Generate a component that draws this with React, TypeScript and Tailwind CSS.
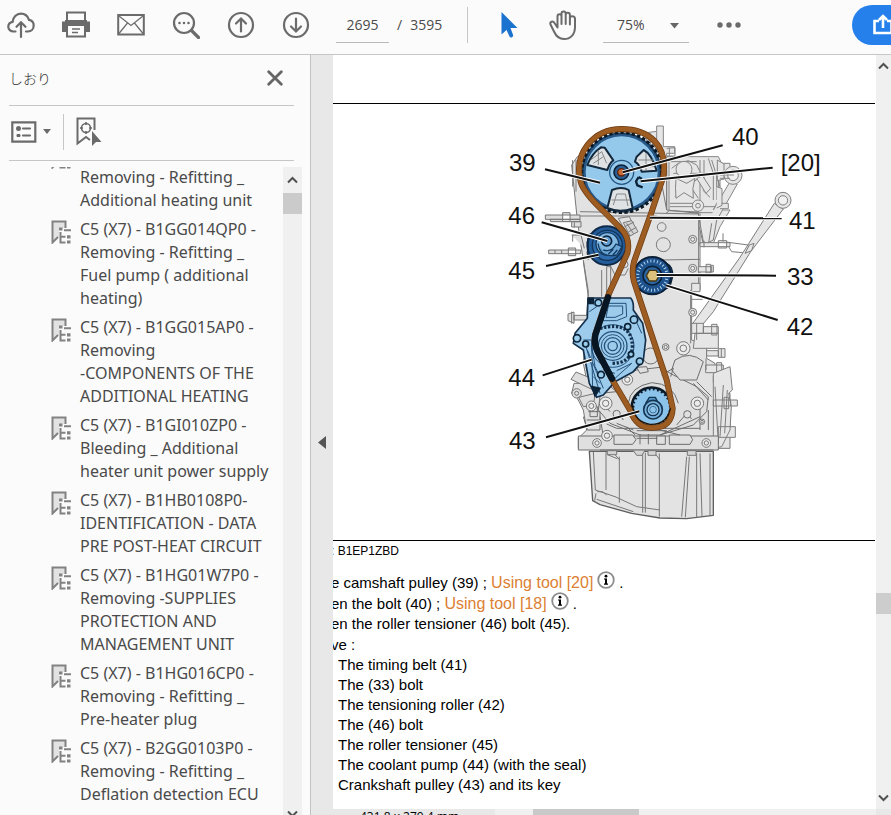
import { useState } from "react";
import type { ReactNode } from "react";

const bookmarks = [
    "C5 (X7) - B1GG0149P0 -\nRemoving - Refitting _\nAdditional heating unit",
    "C5 (X7) - B1GG014QP0 -\nRemoving - Refitting _\nFuel pump ( additional\nheating)",
    "C5 (X7) - B1GG015AP0 -\nRemoving\n-COMPONENTS OF THE\nADDITIONAL HEATING",
    "C5 (X7) - B1GI010ZP0 -\nBleeding _ Additional\nheater unit power supply",
    "C5 (X7) - B1HB0108P0-\nIDENTIFICATION - DATA\nPRE POST-HEAT CIRCUIT",
    "C5 (X7) - B1HG01W7P0 -\nRemoving -SUPPLIES\nPROTECTION AND\nMANAGEMENT UNIT",
    "C5 (X7) - B1HG016CP0 -\nRemoving - Refitting _\nPre-heater plug",
    "C5 (X7) - B2GG0103P0 -\nRemoving - Refitting _\nDeflation detection ECU",
];

const parts = [
    "The timing belt (41)",
    "The (33) bolt",
    "The tensioning roller (42)",
    "The (46) bolt",
    "The roller tensioner (45)",
    "The coolant pump (44) (with the seal)",
    "Crankshaft pulley (43) and its key",
];

// label text, text position, leader line
const callouts = [
    { text: "39", x: 27, y: 182, line: [135, 178, 300, 218] },
    { text: "46", x: 25, y: 341, line: [125, 337, 322, 393] },
    { text: "45", x: 25, y: 507, line: [138, 468, 296, 434] },
    { text: "44", x: 25, y: 829, line: [128, 796, 275, 749] },
    { text: "43", x: 27, y: 1018, line: [138, 982, 418, 904] },
    { text: "40", x: 696, y: 106, line: [368, 187, 668, 106] },
    { text: "[20]", x: 842, y: 183, line: [422, 214, 818, 173] },
    { text: "41", x: 867, y: 356, line: [450, 323, 845, 325] },
    { text: "33", x: 861, y: 524, line: [470, 495, 828, 497] },
    { text: "42", x: 860, y: 674, line: [498, 526, 833, 630] },
];

function IconButton({ label, className = "", children }: { label: string; className?: string; children: ReactNode }) {
    return (
        <button type="button" aria-label={label} className={`flex h-8 shrink-0 items-center justify-center text-[#6b6b6b] ${className}`}>
            {children}
        </button>
    );
}

function Chevron({ up = false }: { up?: boolean }) {
    return (
        <svg width="11" height="8" viewBox="0 0 11 8" fill="none" stroke="#505050" strokeWidth="2">
            <path d={up ? "M1 6.5 5.5 2 10 6.5" : "M1 1.5 5.5 6 10 1.5"} />
        </svg>
    );
}

function BookmarkIcon() {
    return (
        <svg className="mt-[2px] shrink-0" width="20" height="24" viewBox="0 0 20 24" fill="none" stroke="#828282" strokeWidth="2">
            <path d="M1.500 1.500H14.500V8H8v9L1.500 23Z" fill="#e2e2e2" stroke="none" />
            <path d="M14.500 8V1.500H1.500V22.500L7 17" />
            <path d="M9.500 12v10.500h5M9.500 16.800h5M13 10.300h7" />
            <path d="M8 9h3.500M16 16.800h3.500M16 22h3.500" strokeWidth="3.200" />
        </svg>
    );
}

function InfoIcon() {
    return (
        <svg className="mx-1 inline-block align-[-1px]" width="18" height="18" viewBox="0 0 18 18">
            <circle cx="9" cy="9" r="7.800" fill="#fff" stroke="#8d8d8d" strokeWidth="1.800" />
            <circle cx="9" cy="5.200" r="1.400" />
            <path d="M7 7.500h3v5h1v1.200H7v-1.200h1V8.600H7Z" />
        </svg>
    );
}

function Bolt({ x, y, r = 12 }: { x: number; y: number; r?: number }) {
    return (
        <g fill="#ececec" stroke="#777" strokeWidth="3">
            <circle cx={x} cy={y} r={r} />
            <circle cx={x} cy={y} r={r * 0.5} fill="none" />
        </g>
    );
}

function EngineDiagram() {
    return (
        <svg className="block h-auto w-full" viewBox="-501 -18 1626 1308" role="img" aria-label="Timing belt layout" strokeLinejoin="round">
            {/* cylinder head */}
            <g fill="#e6e6e6" stroke="#858585" strokeWidth="3">
                <path d="M440 68 470 64 470 48H490V110H524V130H500V140H655L665 160H690V205H660V260L640 300H690L660 350 640 400H480V140Z" />
                <path d="M470 64V150M452 70V140M440 68v40M500 140V310M507 150V300M512 155H590M515 175 535 160 565 152 590 165 600 185M520 190H620M525 205 545 220H575L595 205M525 260 545 235H575L595 265M510 280H590M510 290H645V308H510M600 150V290M612 150V240M625 145 640 190V270M635 150 660 230M655 165V320M668 170V205M600 190H650V270M608 240 630 262" fill="none" />
                <circle cx="552" cy="178" r="24" />
                <path d="M528 205Q525 235 528 265L552 248 580 265Q575 235 585 205L560 220Z" />
                <path d="M590 205 618 250 632 235 608 198ZM652 150l20 12 0 45-20 5Z" />
                <path d="M640 300 690 215 712 222 645 340 610 400" />
                <circle cx="699" cy="196" r="27" />
                <circle cx="699" cy="196" r="16" fill="#f1f1f1" />
                <path d="M660 195h42M660 205h30M500 115l25-2v25h-25M508 113v25" fill="none" />
                <path d="M665 280h20v16h-25M650 230l16 6v50l-16 8" />
                <circle cx="594" cy="287" r="17" />
                <circle cx="594" cy="287" r="7" fill="none" />
            </g>

            {/* engine block */}
            <path d="M215 165 232 140H470L500 300 596 310V535L575 550V690L620 705V745L645 760V840L690 850V1015H235V985L260 960 250 900 232 865 215 850 222 820 262 820 250 760 265 545 242 400 232 330Z" fill="#e2e2e2" stroke="#777" strokeWidth="3" />
            <g fill="none" stroke="#7a7a7a" strokeWidth="3">
                <path d="M218 150v80M228 150v95M240 305 596 312M240 318H470M250 455 265 560M320 470V550M305 480V560M265 450 260 425M500 300V180M480 450 600 448M600 310V540M572 540V700M498 310 508 302 596 306" />
                <path d="M320 470h12v90M330 465 345 495H375L385 475M355 325 388 320 410 365 385 380Z" />
                <circle cx="485" cy="351" r="13" />
                <circle cx="490" cy="404" r="21" />
                <circle cx="374" cy="463" r="10" />
                <path d="M370 338 395 332 414 365 390 378ZM380 340 400 370M374 350l28-14M385 366l24-14" fill="#d5d5d5" />
            </g>

            {/* studs on the left */}
            <g fill="#dedede" stroke="#777" strokeWidth="3">
                <path d="M136 315H240V328H136ZM150 328H240V335H152ZM188 308v26h22v-26ZM215 335h28v16h-28ZM146 420H242V431H146ZM205 414v23h22v-23ZM185 420v11M165 420v11M215 375h28l10 40M218 375v20M223 337v15" />
                <path d="M204 612 222 606V640L204 632ZM222 616H265V630H222ZM215 605v36" />
                <path d="M213 808 228 786 290 812 280 840Z" />
                <circle cx="230" cy="850" r="14" />
                <circle cx="230" cy="850" r="6" />
                <path d="M236 862 250 890 280 885 286 850Z" />
            </g>

            {/* lifting bar and right-hand fittings */}
            <g fill="#e6e6e6" stroke="#7d7d7d" strokeWidth="3">
                <path d="M823 280 850 297 752 425 640 605 590 665 575 645 718 445Z" />
                <path d="M735 430 748 405 762 400 755 422ZM680 400 695 425 728 428M670 395 745 405" fill="none" />
                <circle cx="849" cy="271" r="24" />
                <circle cx="849" cy="271" r="14" fill="#f0f0f0" />
                <path d="M598 350 608 395 620 400 640 390 650 330M598 330 612 405M625 405 635 340" />
                <path d="M600 398H690V410H600ZM612 392v20M655 392v22H680V392ZM669 370v25M595 470H635V486H595ZM618 463h14v26h-14ZM632 466h8v20h-8" />
                <path d="M575 520H600V545H575ZM575 568H608M590 640V690M575 640H610V670H575ZM610 650h45v20h-45ZM635 643h16v32h-16ZM585 670H655V715H580Z" />
                <path d="M620 722H655V738H620ZM655 716h20v26h-20ZM664 716v26M617 765H670V788H617ZM650 758h15v40h-15ZM640 798H690V818H640ZM655 792v38h16v-38ZM618 745V780" />
                <path d="M640 790 690 770 697 840 686 850 694 890 690 960 665 1010 640 1015ZM645 830 655 1000M670 825 660 980M682 840 674 970M640 870H712V888H640ZM672 862v34h14v-34ZM692 870v18M655 950H706V982H655Z" />
            </g>
            <Bolt x={578} y={388} />
            <Bolt x={578} y={475} />
            <Bolt x={578} y={607} />
            <Bolt x={550} y={715} r={20} />
            <Bolt x={497} y={711} r={10} />

            {/* crankcase front */}
            <g fill="#dfdfdf" stroke="#6d6d6d" strokeWidth="3">
                <path d="M300 860 360 800 410 780 480 772 520 795 590 830 625 860 620 905 580 945 480 975H420L330 940 295 900Z" />
                <path d="M515 780 525 750Q570 720 610 755L590 810H540Z" />
                <path d="M385 880Q390 830 455 818 520 820 535 880M340 800 400 785M485 795 520 775 512 800M295 800 350 845M350 845 300 850M580 820 625 870M590 815 635 860M330 905 300 870M345 900 370 930M350 940 400 960M560 910 530 945M600 920 480 975" fill="none" />
                <circle cx="452" cy="738" r="24" />
                <path d="M410 772 440 770 445 785 420 790Z" />
                <path d="M235 978H655V1020H235ZM250 920 262 960M300 920 310 980M260 930H300M265 905H300V960H262M270 890H292V920H270Z" />
                <path d="M342 975h56l10 14-10 14h-56ZM508 975h62l8 14-8 14h-62ZM470 978h26v25h-26ZM420 972V1003M445 972V1003M410 985h62M480 960 540 975" />
                <path d="M320 942 350 955H600M410 962H500M380 950l25 25M600 890V960M625 900V960M345 905l25 22M555 905l20 22" fill="none" />
                <circle cx="562" cy="913" r="11" />
                <circle cx="350" cy="912" r="11" />
            </g>
            <Bolt x={382} y={809} r={16} />
            <Bolt x={317} y={880} r={19} />
            <Bolt x={592} y={880} r={19} />
            <Bolt x={274} y={888} r={15} />
            <Bolt x={321} y={977} r={16} />
            <Bolt x={291} y={999} r={13} />
            <Bolt x={619} y={999} r={13} />
            <Bolt x={606} y={935} r={8} />

            {/* oil sump */}
            <path d="M268 1024H640V1216L560 1226 480 1224 395 1210 300 1184 278 1172Z" fill="#e3e3e3" stroke="#5f5f5f" strokeWidth="4" />
            <g fill="none" stroke="#777" strokeWidth="3">
                <path d="M280 1026 286 1140 345 1160 410 1190 480 1200M318 1026V1140M358 1040V1178M428 1028V1208M436 1028V1208M478 1030V1220M560 1040 545 1220M568 1040 556 1222M590 1030V1222M600 1030 606 1218M630 1030V1216M290 1168 400 1205M292 1145l16 0 12 10M300 1020H640M288 1150 284 1172" />
                <path d="M322 1022h28v12h-28ZM444 1022h24v14h-24ZM562 1022h26v14h-26ZM400 1022l10 14h16l8-14M322 1034l30 12M345 1034l14 16M468 1034l12 16" fill="#d5d5d5" />
            </g>

            {/* coolant pump 44 */}
            <path d="M264 564H392Q402 575 400 600L428 640 437 690 430 750 400 785 345 815 310 855 290 862 268 820 250 720 220 700 225 670 262 625Z" fill="#9ccbeb" stroke="#15304d" strokeWidth="5" />
            <g fill="none" stroke="#24517c" strokeWidth="3">
                <path d="M315 580H378L380 620 350 632H310ZM325 588H368V612L345 622H318ZM268 572 290 590 268 605M255 700 300 850M262 720 310 835M275 705 285 770 300 800M250 690 275 690 278 840M350 782 395 760 345 805M400 615 425 670M300 640 280 670M280 800l20 20M310 780 345 790" />
                <circle cx="338" cy="708" r="64" />
                <path d="M300 655Q400 630 397 715 390 760 335 760" strokeDasharray="7 5" strokeWidth="10" stroke="#15304d" />
                <circle cx="338" cy="708" r="43" strokeWidth="4" />
                <circle cx="338" cy="708" r="34" />
                <circle cx="338" cy="708" r="25" strokeWidth="4" />
                <circle cx="338" cy="708" r="14" strokeWidth="4" />
            </g>
            <g fill="#9accec" stroke="#0d2338" strokeWidth="5">
                <circle cx="295" cy="578" r="10" />
                <circle cx="231" cy="685" r="11" />
                <circle cx="402" cy="629" r="11" />
                <circle cx="383" cy="650" r="9" />
                <circle cx="419" cy="754" r="10" />
                <circle cx="393" cy="733" r="8" />
                <circle cx="257" cy="702" r="9" />
                <circle cx="303" cy="794" r="10" />
                <path d="M265 565h15v15h-15ZM276 830 300 835 285 858Z" fill="#0d2338" />
            </g>

            {/* camshaft pulley 39 */}
            <circle cx="365" cy="187" r="120" fill="#1d4567" stroke="#0b1825" strokeWidth="10" strokeDasharray="10 7" />
            <circle cx="365" cy="187" r="111" fill="#95c9eb" stroke="#28598a" strokeWidth="6" />
            <g fill="#dfe2e4" stroke="#12283d" strokeWidth="6">
                <path d="M303 112Q275 130 262 165L322 180Q328 160 340 151L314 113Z" />
                <path d="M431 120Q455 132 470 182L425 185Q420 165 405 155L410 140Z" />
                <path d="M336 240Q365 228 386 240L398 295Q360 310 322 294Z" />
            </g>
            <g fill="none" stroke="#878787" strokeWidth="3">
                <path d="M272 150 305 125 320 160M280 160 310 140M295 120V165M415 150H460M420 170H462M438 130V180M340 285 350 252H376L384 288M335 270H390" />
            </g>
            <circle cx="365" cy="187" r="36" fill="#96c9ea" stroke="#245580" strokeWidth="4" />
            <circle cx="364" cy="187" r="22" fill="#2a6096" stroke="#0c2238" strokeWidth="5" />
            <circle cx="364" cy="187" r="11" fill="#c96b35" stroke="#5e2510" strokeWidth="4" />
            <path d="M416 201 408 214 412 226 428 232M416 201 426 207" fill="none" stroke="#0d2338" strokeWidth="7" />

            {/* tensioner 46 and roller 42 */}
            <circle cx="320" cy="407" r="58" fill="#235b98" stroke="#0e2a48" strokeWidth="6" />
            <circle cx="322" cy="406" r="45" fill="#2e6cad" stroke="#113458" strokeWidth="4" />
            <circle cx="322" cy="402" r="34" fill="#83b9e2" stroke="#133a61" strokeWidth="4" />
            <path d="M294 400Q300 445 350 435L366 410 348 402Q335 428 310 420M325 432 340 418M336 438 352 420" fill="#6aa5d5" stroke="#133a61" strokeWidth="4" />
            <circle cx="320" cy="393" r="15" fill="#5d9bd0" stroke="#0c2238" strokeWidth="5" />
            <path d="M264 385V440M272 370 262 400" stroke="#0e2a48" strokeWidth="5" />
            <path d="M500 460Q520 470 518 500L510 530 490 540Z" fill="#1b4f88" stroke="#0c2238" strokeWidth="4" />
            <circle cx="457" cy="497" r="56" fill="#1e528d" stroke="#0b2038" strokeWidth="6" />
            <circle cx="457" cy="497" r="44" fill="none" stroke="#b5d5ee" strokeWidth="9" strokeDasharray="3 7" />
            <circle cx="457" cy="497" r="28" fill="#2c68a8" stroke="#0b2038" strokeWidth="5" />
            <path d="M448 481h20l10 16-10 16h-20l-9-16Z" fill="#dcc17d" stroke="#473711" strokeWidth="4" />

            {/* crankshaft pulley 43 */}
            <circle cx="455" cy="893" r="60" fill="#0b1825" stroke="#0b1825" strokeWidth="8" />
            <circle cx="455" cy="893" r="52" fill="#8bc3ea" stroke="#8bc3ea" strokeWidth="9" strokeDasharray="7 5" />
            <path d="M437 880 448 862H466L475 880" fill="#5696c9" stroke="#143450" strokeWidth="4" />
            <circle cx="459" cy="899" r="28" fill="#78b2df" stroke="#143450" strokeWidth="5" />
            <circle cx="459" cy="899" r="18" fill="#8fc4e8" stroke="#143450" strokeWidth="4" />
            <circle cx="459" cy="899" r="10" fill="none" stroke="#3b719d" strokeWidth="3" />

            {/* timing belt 41 */}
            <g fill="none" strokeLinecap="round">
                <path d="M490 200C505 105 445 57 365 57 280 57 220 130 242 215 250 245 280 275 310 303L365 358Q392 388 382 430L325 555 285 675Q280 700 293 725L340 815 390 900Q410 955 455 953 515 955 518 895L500 810 425 585 402 515Q394 485 402 455L455 305Z" stroke="#6b3a12" strokeWidth="18" />
                <path d="M490 200C505 105 445 57 365 57 280 57 220 130 242 215 250 245 280 275 310 303L365 358Q392 388 382 430L325 555 285 675Q280 700 293 725L340 815 390 900Q410 955 455 953 515 955 518 895L500 810 425 585 402 515Q394 485 402 455L455 305Z" stroke="#9c5c22" strokeWidth="14" />
                <path d="M324 562 286 675Q281 700 293 725L336 806" stroke="#081522" strokeWidth="19" />
                <path d="M398 885Q402 935 450 943 500 945 511 895" stroke="#1d1208" strokeWidth="4" />
            </g>

            {callouts.map(({ text, x, y, line }) => (
                <g key={text}>
                    <path d={`M${line[0]} ${line[1]}L${line[2]} ${line[3]}`} stroke="#fff" strokeWidth="12" />
                    <path d={`M${line[0]} ${line[1]}L${line[2]} ${line[3]}`} stroke="#111" strokeWidth="6" />
                    <text x={x} y={y} fontSize="72" fill="#111" className="font-['Liberation_Sans',sans-serif]">{text}</text>
                </g>
            ))}
        </svg>
    );
}

function Toolbar() {
    const [page, setPage] = useState("2695");

    return (
        <header className="flex h-[55px] shrink-0 items-center overflow-hidden border-b border-[#c6c6c6] bg-[#fbfbfb] pb-1 pl-[7px] text-sm text-[#4b4b4b]">
            <div className="flex shrink-0 gap-[27px]">
                <IconButton label="Upload" className="w-7">
                    <svg width="28" height="28" viewBox="0 0 28 28" fill="none" stroke="currentColor" strokeWidth="2.200" strokeLinecap="round">
                        <path d="M8.500 20.500H6.500C3.500 20.500 1.300 18.500 1.300 15.700c0-2.600 1.700-4.500 4.300-4.900C6 6.300 9.500 2.600 13.800 2.600c4.200 0 7.100 2.600 8.200 6.300 2.800.6 4.700 2.900 4.700 5.600 0 3.400-2.400 6-5.700 6h-2" />
                        <path d="M14 26V12M9.500 15.800 14 11.300l4.500 4.500" />
                    </svg>
                </IconButton>
                <IconButton label="Print" className="w-7">
                    <svg width="28" height="28" viewBox="0 0 28 28" fill="none" stroke="currentColor" strokeWidth="2">
                        <path d="M5 10V1.500h18V10" />
                        <path d="M0 10.500h3V9h22v1.500h3V21h-4.500v-6h-19v6H0Z" fill="currentColor" stroke="none" />
                        <path d="M5 15v10.500h18V15" fill="#fbfbfb" />
                        <path d="M10 18h8M10 21.500h6" strokeWidth="1.500" />
                    </svg>
                </IconButton>
                <IconButton label="Send by email" className="w-7">
                    <svg width="28" height="28" viewBox="0 0 28 28" fill="none" stroke="currentColor" strokeWidth="2">
                        <path d="M1.200 4h25.600v19.500H1.200Z" />
                        <path d="M2 5l12 9.500L26 5M2 22.500l8.500-10.500M26 22.500 17.500 12" strokeWidth="1.200" />
                    </svg>
                </IconButton>
                <IconButton label="Find" className="w-7">
                    <svg width="28" height="28" viewBox="0 0 28 28" fill="none" stroke="currentColor" strokeWidth="2.200" strokeLinecap="round">
                        <circle cx="12" cy="12" r="10" />
                        <path d="m19.500 19.500 7 7" strokeWidth="3.200" />
                        <path d="M7.500 12h.01M12 12h.01M16.500 12h.01" strokeWidth="2.600" />
                    </svg>
                </IconButton>
                <IconButton label="Previous page" className="w-7">
                    <svg width="28" height="28" viewBox="0 0 28 28" fill="none" stroke="currentColor" strokeWidth="2.200" strokeLinecap="round">
                        <circle cx="14" cy="14" r="12" />
                        <path d="M14 20.500v-13M9 12.500l5-5 5 5" />
                    </svg>
                </IconButton>
                <IconButton label="Next page" className="w-7">
                    <svg width="28" height="28" viewBox="0 0 28 28" fill="none" stroke="currentColor" strokeWidth="2.200" strokeLinecap="round">
                        <circle cx="14" cy="14" r="12" />
                        <path d="M14 7.500v13M9 15.500l5 5 5-5" />
                    </svg>
                </IconButton>
            </div>
            <input
                aria-label="Page number"
                value={page}
                onChange={(e) => setPage(e.target.value)}
                className="ml-[26px] h-9 w-[53px] shrink-0 border-b border-[#b9b9b9] bg-transparent text-center outline-none"
            />
            <div className="flex w-[78px] shrink-0 gap-2 pl-2">
                <span>/</span>
                <span>3595</span>
            </div>
            <div className="h-9 w-px shrink-0 bg-[#c6c6c6]" />
            <IconButton label="Select tool" className="ml-[29px] w-6">
                <svg width="24" height="28" viewBox="0 0 24 28" fill="#1c72cf">
                    <path d="M4.500 1v22.500l5-4.500 3 6.500q.8 1.600 2.500.8 1.600-.9 1-2.500L13.500 17H20.500Z" />
                </svg>
            </IconButton>
            <IconButton label="Hand tool" className="ml-7 w-7">
                <svg width="28" height="30" viewBox="0 0 28 30" fill="none" stroke="currentColor" strokeWidth="2" strokeLinecap="round" strokeLinejoin="round">
                    <path d="M8.500 17.500V6.500c0-3 4-3 4 0M12.500 14V3.500c0-2.800 4.200-2.800 4.200 0V14M16.700 5c0-3 4.200-3 4.200 0v9.500M20.900 8.500c0-3 4.600-3 5.100 0V17c0 7.500-4.500 12-11 12-5.500 0-8-3-10-7.500L1.500 14.500c-1-2.700 2.400-4.200 4-1.500l3 4.500M12.500 6.500V14" />
                </svg>
            </IconButton>
            <div className="relative ml-[26px] w-[86px] shrink-0">
                <select aria-label="Zoom" defaultValue="75%" className="h-9 w-full appearance-none border-b border-[#b9b9b9] bg-transparent pl-[14px] outline-none">
                    <option>75%</option>
                    <option>100%</option>
                    <option>125%</option>
                </select>
                <svg className="pointer-events-none absolute top-4 right-[10px]" width="9" height="6" viewBox="0 0 9 6" fill="#666">
                    <path d="M0 0h9L4.500 5.500Z" />
                </svg>
            </div>
            <IconButton label="More tools" className="ml-7 w-6">
                <svg width="24" height="6" viewBox="0 0 24 6" fill="currentColor">
                    <circle cx="3" cy="3" r="2.700" />
                    <circle cx="12" cy="3" r="2.700" />
                    <circle cx="21" cy="3" r="2.700" />
                </svg>
            </IconButton>
            <button type="button" aria-label="Share" className="ml-[111px] flex h-10 w-[120px] shrink-0 items-center rounded-full bg-[#2680eb] pl-5">
                <svg width="22" height="22" viewBox="0 0 22 22" fill="none" stroke="#fff" strokeWidth="2.600">
                    <path d="M7 7H2.500v12h17V7H15M11 14V3M7 6l4-4 4 4" />
                </svg>
            </button>
        </header>
    );
}

function Sidebar() {
    return (
        <aside className="flex w-[311px] shrink-0 flex-col border-r border-[#c2c2c2] bg-[#fbfbfb]">
            <div className="mr-4 ml-[9px] flex h-[51px] shrink-0 items-center justify-between border-b border-[#c6c6c6] pr-[11px] pb-1">
                <h2 className="font-['Noto_Sans_CJK_JP',sans-serif] text-sm font-light text-[#333]">しおり</h2>
                <button type="button" aria-label="Close">
                    <svg width="16" height="16" viewBox="0 0 16 16" stroke="#666" strokeWidth="2.800" strokeLinecap="round">
                        <path d="m1.700 1.700 12.600 12.600M14.300 1.700 1.700 14.300" />
                    </svg>
                </button>
            </div>
            <div className="mr-4 ml-[9px] flex h-[55px] shrink-0 items-center border-b border-[#c6c6c6] pb-[3px] pl-[2px] text-[#6b6b6b]">
                <button type="button" aria-label="Options" className="flex items-center gap-[6px]">
                    <svg width="26" height="22" viewBox="0 0 26 22" fill="none" stroke="currentColor" strokeWidth="2.200">
                        <path d="M1.300 1.300h23v19.400h-23Z" />
                        <path d="M12 7.500h7M12 14.500h7" strokeLinecap="round" />
                        <circle cx="7.500" cy="7.500" r="1.400" fill="currentColor" />
                        <path d="M6 13.500h3v2H6Z" fill="currentColor" strokeWidth="1" />
                    </svg>
                    <svg width="8" height="5" viewBox="0 0 8 5" fill="currentColor">
                        <path d="M0 0h8L4 5Z" />
                    </svg>
                </button>
                <div className="ml-3 h-9 w-px bg-[#c6c6c6]" />
                <button type="button" aria-label="Find current bookmark" className="ml-3">
                    <svg width="26" height="29" viewBox="0 0 26 29" fill="none" stroke="currentColor" strokeWidth="2">
                        <path d="M18.500 13V1.500h-17v25l8.500-6.500 4 3" />
                        <circle cx="10" cy="11" r="4.500" strokeWidth="1.600" />
                        <path d="M10 5v3M10 14v3M4 11h3M13 11h3" strokeWidth="1.600" />
                        <path d="M16 14v15l4-4h5.500Z" fill="currentColor" stroke="none" />
                    </svg>
                </button>
            </div>
            <div className="mt-[6px] flex min-h-0 flex-1 overflow-hidden">
                <nav className="min-w-0 flex-1 overflow-hidden">
                    <ul className="-mt-6 flex flex-col gap-[6px] pl-[51px]">
                        {bookmarks.map((title) => (
                            <li key={title}>
                                <a href="#page" className="flex items-start gap-[9px] font-['Noto_Sans',sans-serif] text-base leading-[23px] whitespace-pre text-[#4a4a4a]">
                                    <BookmarkIcon />
                                    {title}
                                </a>
                            </li>
                        ))}
                    </ul>
                </nav>
                <div className="mr-2 flex w-[19px] shrink-0 flex-col items-center bg-[#f0f0f0]">
                    <div className="flex h-[26px] items-center"><Chevron up /></div>
                    <div className="h-[21px] w-full bg-[#cbcbcb]" />
                    <div className="mt-auto h-[5px] overflow-hidden"><Chevron /></div>
                </div>
            </div>
        </aside>
    );
}

function DocumentPage() {
    return (
        <div className="min-h-0 flex-1 overflow-hidden bg-white pr-px font-['Liberation_Sans',sans-serif] text-[15px] whitespace-nowrap text-black">
            <figure className="mt-12">
                <div className="border-y border-black">
                    <EngineDiagram />
                </div>
                <figcaption className="-ml-[2px] h-[30px] pt-[2px] text-xs leading-4">: B1EP1ZBD</figcaption>
            </figure>
            <div className="-ml-[2px] leading-[21px]">
                <p className="h-[21px]">
                    e camshaft pulley (39) ; <a href="#tool-20" className="text-base leading-none text-[#dc8033]">Using tool [20]</a><InfoIcon />.
                </p>
                <p className="h-[21px]">
                    en the bolt (40) ; <a href="#tool-18" className="text-base leading-none text-[#dc8033]">Using tool [18]</a><InfoIcon />.
                </p>
                <p>en the roller tensioner (46) bolt (45).</p>
                <p>ve :</p>
            </div>
            <ul className="pl-[5px] leading-5">
                {parts.map((part) => <li key={part}>{part}</li>)}
            </ul>
        </div>
    );
}

function App() {
    return (
        <div className="flex h-screen flex-col overflow-hidden bg-[#e8e8e8] font-['Open_Sans',sans-serif]">
            <Toolbar />
            <div className="flex min-h-0 flex-1">
                <Sidebar />
                <main className="flex min-w-0 flex-1 flex-col">
                    <div className="flex min-h-0 flex-1">
                        <button type="button" aria-label="Collapse bookmarks" className="flex w-[22px] shrink-0 items-center justify-center pt-5">
                            <svg width="8" height="13" viewBox="0 0 8 13" fill="#555"><path d="M8 0v13L0 6.500Z" /></svg>
                        </button>
                        <DocumentPage />
                        <div className="flex w-[15px] shrink-0 flex-col items-center bg-[#f0f0f0] pb-[7px]">
                            <div className="flex h-[22px] items-center"><Chevron up /></div>
                            <div className="grow-[512]" />
                            <div className="h-[21px] w-full bg-[#cdcdcd]" />
                            <div className="grow-[179]" />
                            <Chevron />
                        </div>
                    </div>
                    <div className="flex h-[6px] shrink-0 overflow-hidden pr-[15px] text-xs leading-4 text-black">
                        <span className="w-[184px] shrink-0 pl-[49px]">431.8 x 279.4 mm</span>
                        <div className="flex min-w-0 flex-1 bg-[#f0f0f0]">
                            <div className="ml-[38px] h-full w-[106px] bg-[#c9c9c9]" />
                        </div>
                    </div>
                </main>
            </div>
        </div>
    );
}

export default App;
